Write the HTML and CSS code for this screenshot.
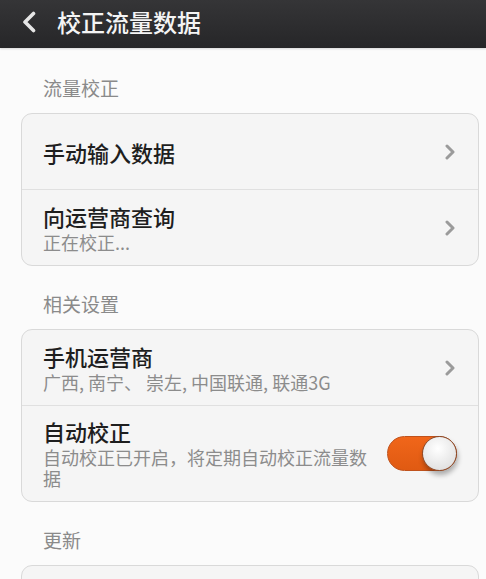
FILE: index.html
```html
<!DOCTYPE html>
<html lang="zh-CN">
<head>
<meta charset="utf-8">
<title>校正流量数据</title>
<link rel="stylesheet" href="styles.css">
</head>
<body>
<header class="topbar">
  <svg class="back" width="16" height="22" viewBox="0 0 16 22"><path d="M12.5 2.5 L4 11 L12.5 19.5" fill="none" stroke="#e6e6e6" stroke-width="3.6" stroke-linecap="round" stroke-linejoin="round"/></svg>
  <h1 class="title">校正流量数据</h1>
</header>
<main class="content">
  <div class="section-label first">流量校正</div>
  <div class="card">
    <div class="row row-single">
      <div class="row-text"><div class="row-title">手动输入数据</div></div>
      <svg class="chev" width="12" height="16" viewBox="0 0 12 16"><path d="M3 2 L9 8 L3 14" fill="none" stroke="#9b9b9b" stroke-width="3" stroke-linecap="round" stroke-linejoin="round"/></svg>
    </div>
    <div class="row">
      <div class="row-text"><div class="row-title">向运营商查询</div><div class="row-sub">正在校正...</div></div>
      <svg class="chev" width="12" height="16" viewBox="0 0 12 16"><path d="M3 2 L9 8 L3 14" fill="none" stroke="#9b9b9b" stroke-width="3" stroke-linecap="round" stroke-linejoin="round"/></svg>
    </div>
  </div>
  <div class="section-label">相关设置</div>
  <div class="card">
    <div class="row">
      <div class="row-text"><div class="row-title">手机运营商</div><div class="row-sub">广西, 南宁、 崇左, 中国联通, 联通3G</div></div>
      <svg class="chev" width="12" height="16" viewBox="0 0 12 16"><path d="M3 2 L9 8 L3 14" fill="none" stroke="#9b9b9b" stroke-width="3" stroke-linecap="round" stroke-linejoin="round"/></svg>
    </div>
    <div class="row">
      <div class="row-text narrow"><div class="row-title">自动校正</div><div class="row-sub">自动校正已开启，将定期自动校正流量数据</div></div>
      <div class="toggle"><div class="knob"></div></div>
    </div>
  </div>
  <div class="section-label">更新</div>
  <div class="card card-last"></div>
</main>
</body>
</html>
```
FILE: styles.css
```css
* { box-sizing: border-box; }
html, body { margin: 0; padding: 0; }
body {
  width: 486px;
  height: 579px;
  overflow: hidden;
  background: #fbfbfb;
  font-family: "Noto Sans CJK SC", "Noto Sans", "Liberation Sans", sans-serif;
}
.topbar {
  height: 48px;
  display: flex;
  align-items: center;
  padding: 0 0 4px 21px;
  background: linear-gradient(#353537, #262628);
  box-shadow: 0 1px 2px rgba(0,0,0,0.15);
}
.back { display: block; margin-right: 20px; }
.title {
  margin: 0;
  color: #f4f4f4;
  font-size: 24px;
  font-weight: 500;
  line-height: 30px;
}
.content { padding: 0 7px 0 21px; }
.section-label {
  padding: 27px 0 14px 22px;
  font-size: 19px;
  line-height: 22px;
  color: #8a8a8a;
}
.section-label.first { margin-top: 2px; }
.card {
  background: #f5f5f5;
  border: 1px solid #d9d9d9;
  border-radius: 11px;
}
.card-last { height: 40px; }
.row {
  display: flex;
  align-items: center;
  padding: 12px 22px 12px 21px;
  min-height: 75px;
}
.row + .row { border-top: 1px solid #e0e0e0; min-height: 76px; }
.row-text { flex: 1; min-width: 0; }
.row-text.narrow { padding-right: 10px; }
.row-title {
  font-size: 22px;
  line-height: 26px;
  font-weight: 500;
  color: #1e1e1e;
}
.row-sub {
  margin-top: 3px;
  font-size: 18px;
  line-height: 21px;
  color: #8c8c8c;
}
.chev { display: block; flex: none; }
.toggle {
  flex: none;
  position: relative;
  width: 70px;
  height: 35px;
  border-radius: 18px;
  background: linear-gradient(#f0661a, #e05a12);
  border: 1px solid #c0521c;
  margin-right: -1px;
}
.knob {
  position: absolute;
  right: -1px;
  top: -1px;
  width: 35px;
  height: 35px;
  border-radius: 50%;
  background: radial-gradient(circle at 45% 35%, #ffffff, #e4e4e4 70%, #d6d6d6);
  border: 1.5px solid #8a4a2a;
  box-shadow: 1px 4px 5px rgba(0,0,0,0.3);
}
```
